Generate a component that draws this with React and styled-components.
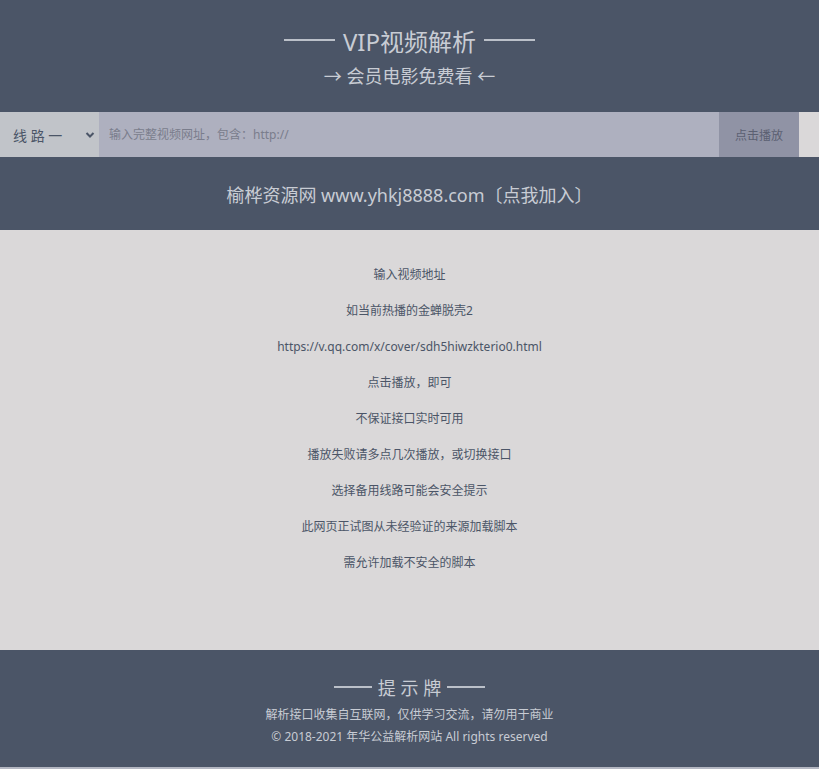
import React from "react";
import styled, { createGlobalStyle } from "styled-components";

const GlobalStyle = createGlobalStyle`
  html, body {
    margin: 0;
    padding: 0;
    background: #dad8d9;
    font-family: "Noto Sans", "Noto Sans CJK SC", sans-serif;
  }
  * { box-sizing: border-box; }
`;

const tips = [
  "输入视频地址",
  "如当前热播的金蝉脱壳2",
  "https://v.qq.com/x/cover/sdh5hiwzkterio0.html",
  "点击播放，即可",
  "不保证接口实时可用",
  "播放失败请多点几次播放，或切换接口",
  "选择备用线路可能会安全提示",
  "此网页正试图从未经验证的来源加载脚本",
  "需允许加载不安全的脚本",
];

function App() {
  return (
    <Page>
      <GlobalStyle />
      <Header>
        <Title>
          <Rule $w={51} />
          <span>VIP视频解析</span>
          <Rule $w={51} />
        </Title>
        <Subtitle>→ 会员电影免费看 ←</Subtitle>
      </Header>
      <SearchRow>
        <LineSelect>
          <span>线 路 一</span>
          <Chevron viewBox="0 0 10 10">
            <path d="M1.5 3 L5 6.5 L8.5 3" fill="none" stroke="#4b5567" strokeWidth="2" />
          </Chevron>
        </LineSelect>
        <UrlInput placeholder="输入完整视频网址，包含：http://" />
        <PlayButton>点击播放</PlayButton>
        <Spacer />
      </SearchRow>
      <Banner>榆桦资源网 www.yhkj8888.com〔点我加入〕</Banner>
      <Content>
        {tips.map((t) => (
          <Tip key={t}>{t}</Tip>
        ))}
      </Content>
      <Footer>
        <FooterTitle>
          <Rule $w={38} />
          <span>提 示 牌</span>
          <Rule $w={38} />
        </FooterTitle>
        <FooterLine>解析接口收集自互联网，仅供学习交流，请勿用于商业</FooterLine>
        <FooterLine>© 2018-2021 年华公益解析网站 All rights reserved</FooterLine>
      </Footer>
    </Page>
  );
}

export default App;

const Page = styled.div`
  width: 100%;
  min-height: 769px;
  background: #dad8d9;
`;

const Header = styled.header`
  background: #4b5567;
  color: #c8ccd4;
  text-align: center;
  padding: 22px 0 18px;
`;

const Rule = styled.span`
  display: inline-block;
  width: ${(p) => p.$w}px;
  height: 1.5px;
  background: currentColor;
  opacity: 0.9;
`;

const Title = styled.h1`
  margin: 0;
  height: 36px;
  display: flex;
  align-items: center;
  justify-content: center;
  gap: 8px;
  font-size: 24px;
  font-weight: normal;
`;

const Subtitle = styled.h2`
  margin: 0;
  font-size: 18px;
  font-weight: normal;
  line-height: 36px;
`;

const SearchRow = styled.div`
  display: flex;
  height: 45px;
`;

const LineSelect = styled.div`
  width: 99px;
  background: #c1c4c9;
  display: flex;
  align-items: center;
  justify-content: space-between;
  padding: 0 4px 0 13px;
  font-size: 14px;
  color: #4b5567;
`;

const Chevron = styled.svg`
  width: 10px;
  height: 10px;
`;

const UrlInput = styled.input`
  flex: 1;
  border: none;
  outline: none;
  background: #aeb0bf;
  padding: 0 10px;
  font-family: inherit;
  font-size: 12px;
  color: #4b5567;
  &::placeholder {
    color: #7a7d8c;
  }
`;

const PlayButton = styled.button`
  width: 80px;
  border: none;
  background: #9093a5;
  color: #5b6072;
  font-family: inherit;
  font-size: 12px;
  cursor: pointer;
`;

const Spacer = styled.div`
  width: 20px;
  background: #dad8d9;
`;

const Banner = styled.div`
  background: #4b5567;
  color: #c8ccd4;
  height: 73px;
  display: flex;
  align-items: center;
  justify-content: center;
  font-size: 18px;
`;

const Content = styled.main`
  padding: 27px 0 69px;
  text-align: center;
`;

const Tip = styled.p`
  margin: 0;
  line-height: 36px;
  font-size: 12px;
  color: #4b5567;
`;

const Footer = styled.footer`
  background: #4b5567;
  color: #c8ccd4;
  text-align: center;
  padding: 22px 0 19px;
  border-bottom: 2px solid #b4b7c2;
`;

const FooterTitle = styled.div`
  height: 30px;
  margin-bottom: 2px;
  display: flex;
  align-items: center;
  justify-content: center;
  gap: 6px;
  font-size: 18px;
`;

const FooterLine = styled.div`
  font-size: 12px;
  line-height: 22px;
`;
